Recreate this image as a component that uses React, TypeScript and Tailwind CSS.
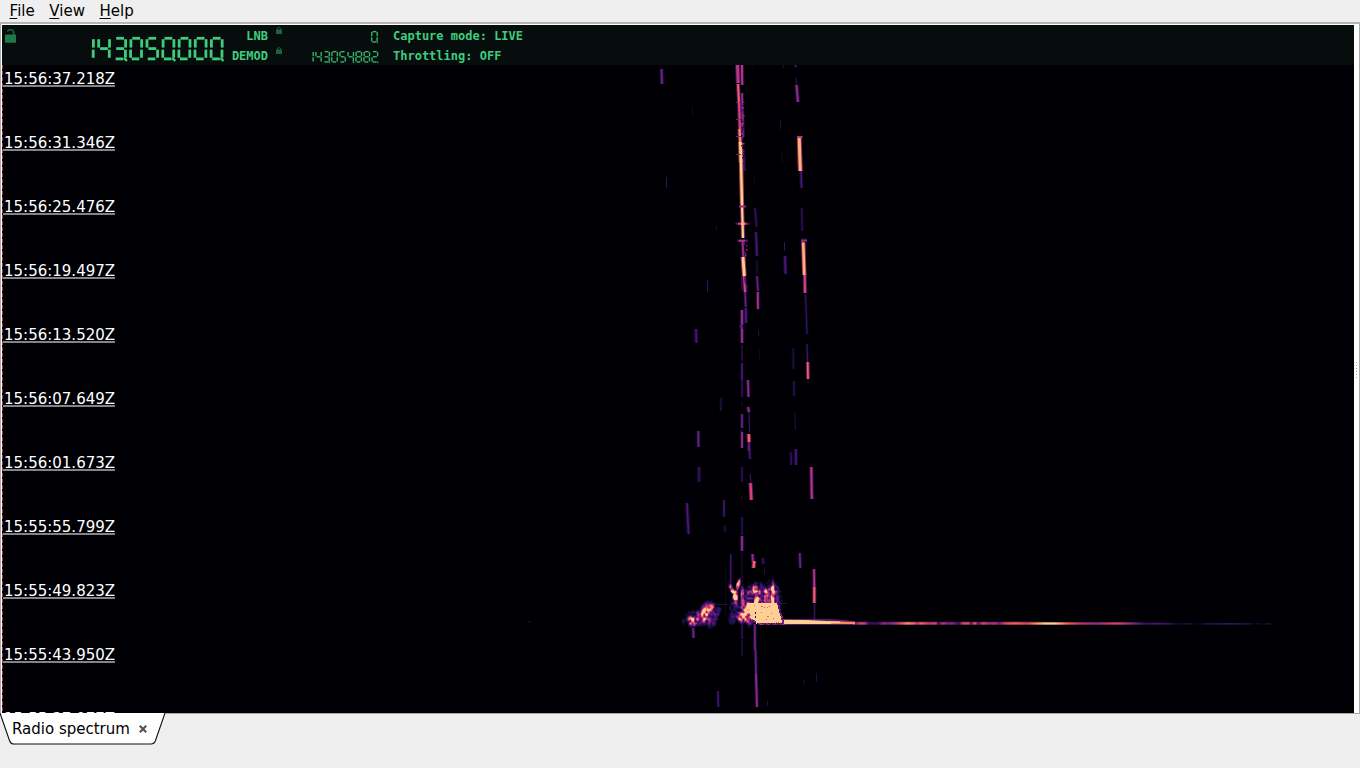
import type { ReactNode } from "react";

const SEGMENTS: Record<string, string> = {
  "0": "abcdef",
  "1": "bc",
  "2": "abged",
  "3": "abgcd",
  "4": "fgbc",
  "5": "afgcd",
  "8": "abcdefg",
};

const SEGMENT_PATHS: Record<string, string> = {
  a: "M3 1.3H10.8",
  b: "M12.4 2.2V10.6",
  c: "M12.2 12.6V20.8",
  d: "M2.4 21.9H10",
  e: "M1.3 12.6V20.8",
  f: "M1.6 2.2V10.6",
  g: "M3 11.6H10.8",
};

function Digits({ value, dots, small }: { value: string; dots: number[]; small?: boolean }) {
  const width = value.length * 16.1 - 1;
  const scale = small ? 0.5 : 1;
  return (
    <svg
      width={width * scale}
      height={24 * scale}
      viewBox={`0 0 ${width} 24`}
      stroke={small ? "#34b46d" : "#3dce7d"}
      strokeWidth={2.8}
      className="block overflow-visible"
    >
      {value.split("").map((digit, i) => (
        <g key={i} transform={`translate(${i * 16.1} 0)`}>
          {SEGMENTS[digit].split("").map((s) => (
            <path key={s} d={SEGMENT_PATHS[s]} />
          ))}
          {dots.includes(i) && <path d="M10.8 21.2l3 2.6" strokeWidth={2.4} />}
        </g>
      ))}
    </svg>
  );
}

function Lock({ open }: { open?: boolean }) {
  return open ? (
    <svg width="11" height="14" viewBox="0 0 11 14" className="block">
      <path d="M2.6 2.7Q3 .8 5.5.8Q8.7.8 8.7 4V6" fill="none" stroke="#19663e" strokeWidth="1.5" />
      <rect x="0" y="5.5" width="11" height="8.2" rx=".6" fill="#20784a" />
    </svg>
  ) : (
    <svg width="6" height="7" viewBox="0 0 6 7" className="block">
      <path d="M1.3 3V2Q1.3.6 3 .6T4.7 2V3" fill="none" stroke="#17583a" strokeWidth="1" />
      <rect x="0" y="2.5" width="6" height="4.5" fill="#1b643e" />
    </svg>
  );
}

const PALETTE = [
  "#000004", "#0b0822", "#1d1147", "#35115f", "#51127c", "#721f81",
  "#932b80", "#b73779", "#d8456c", "#f1605d", "#fc8961", "#feb078", "#fecf92",
];

// x1, y1, x2, y2, width, level, halo level
type Streak = [number, number, number, number, number, number, number];

const STREAKS: Streak[] = [
  [661.5, 69, 662, 84, 2, 5, 2],
  [692.5, 106, 692.5, 117, 1, 1, 0],
  [666.5, 177, 666.5, 188, 1, 3, 0],
  [752.5, 65, 752.5, 67, 1, 1, 0],
  [783, 65, 783.5, 68, 1, 2, 0],
  [795, 65, 796, 67, 2, 4, 0],
  [796, 78, 796.5, 86, 1, 3, 0],
  [796.5, 85, 798, 102, 2, 6, 3],
  [780.5, 121, 780.8, 129, 1, 2, 0],
  [782, 150, 782.5, 163, 1, 1, 0],
  [754.5, 174, 754.5, 186, 1, 1, 0],
  [737.5, 65, 738.2, 83, 3, 7, 4],
  [742, 65, 742.2, 85, 2, 7, 3],
  [738, 84, 739, 103, 2, 9, 5],
  [742, 93, 743, 137, 1.7, 6, 3],
  [739, 103, 740, 129, 2, 8, 5],
  [739.5, 129, 740.4, 144, 2.3, 10, 6],
  [744, 154, 744.5, 171, 1.5, 3, 2],
  [740.4, 142, 741, 162, 2.7, 12, 9],
  [741, 161, 742, 205, 2.3, 12, 9],
  [742, 204, 743, 238, 2.1, 12, 7],
  [742.5, 240, 743.5, 258, 2, 6, 3],
  [743, 257, 744.3, 276, 2.8, 12, 8],
  [744, 276, 745, 292, 2, 8, 4],
  [741.5, 276, 742, 291, 1, 3, 0],
  [745, 292, 745.8, 307, 1.5, 5, 2],
  [745.8, 308, 746, 323, 2, 4, 2],
  [742, 310, 742, 325, 2, 6, 3],
  [741, 325, 742, 329, 2, 5, 3],
  [742, 329, 742, 343, 2, 6, 3],
  [742, 345, 742, 361, 1.3, 3, 0],
  [742, 363, 742, 380, 1.7, 4, 1],
  [742, 380, 742, 397, 1.4, 3, 1],
  [748, 380, 748.5, 397, 1.7, 6, 3],
  [748, 407, 749, 412, 2, 6, 3],
  [749, 412, 749.5, 433, 1.3, 3, 0],
  [748.8, 434, 749, 442, 2.5, 9, 5],
  [749, 442, 749, 451, 1.6, 5, 3],
  [749.5, 451, 750, 459, 1.4, 4, 2],
  [750, 474, 751, 483, 1.3, 3, 0],
  [750.5, 483, 751.3, 500, 2.3, 8, 5],
  [742, 402, 742, 405, 1, 2, 0],
  [742, 414, 742, 428, 1.6, 5, 2],
  [741, 430, 742, 434, 2, 2, 0],
  [742, 432, 742, 448, 1.8, 6, 2],
  [742, 467, 742, 482, 1.4, 3, 1],
  [742, 496, 742, 499, 1, 2, 0],
  [742, 517, 742, 535, 1.2, 3, 1],
  [742, 536, 742, 551, 1.8, 6, 3],
  [742, 552, 742, 590, 1, 2, 0],
  [755, 208, 756.5, 227, 1.5, 3, 1],
  [756, 232, 757, 256, 1.5, 4, 2],
  [757, 260, 757, 273, 1, 2, 1],
  [757, 276, 758, 291, 1.5, 5, 2],
  [757.8, 292, 758, 309, 1.7, 7, 3],
  [758.5, 329, 759, 336, 1, 2, 0],
  [759.5, 349, 759.5, 360, 1, 1, 0],
  [784.5, 242, 784.5, 251, 1, 3, 0],
  [785, 256, 785.5, 274, 1.7, 4, 2],
  [799.2, 137, 800.3, 171, 3, 11, 7],
  [797, 137, 802.5, 137, 2, 7, 0],
  [801, 171, 801.5, 188, 1.5, 4, 2],
  [801.7, 208, 802.2, 231, 1.3, 3, 1],
  [803.2, 241, 804.3, 275, 2.6, 11, 7],
  [801, 240.5, 807, 240.5, 2, 6, 2],
  [804.7, 275, 805, 293, 2, 8, 5],
  [805.5, 294, 807, 334, 1.3, 3, 1],
  [807, 344, 807.5, 362, 1, 4, 1],
  [807.7, 362, 808, 379, 1.8, 9, 5],
  [808, 380, 808, 384, 1, 2, 0],
  [716.5, 226, 716.5, 229, 1, 2, 0],
  [707.5, 280, 707.5, 292, 1, 3, 0],
  [696, 329, 696.3, 343, 1.7, 4, 2],
  [720.8, 398, 720.8, 411, 1.3, 2, 1],
  [698.3, 431, 698.5, 447, 1.8, 5, 2],
  [699, 467, 699, 482, 1.7, 3, 2],
  [687, 503, 688.5, 534, 1.7, 4, 2],
  [724, 500, 724, 517, 1.5, 4, 1],
  [725, 525, 725, 532, 1.3, 2, 1],
  [793, 348, 793.5, 369, 1.2, 2, 1],
  [794, 381, 794, 396, 1.3, 3, 1],
  [795, 413, 795.3, 430, 1, 2, 0],
  [790.8, 452, 791.3, 465, 1.5, 3, 1],
  [795.8, 449, 796, 465, 1.6, 4, 2],
  [811.3, 467, 811.8, 499, 2, 7, 4],
  [799.8, 553, 800.3, 568, 1.7, 5, 2],
  [814, 569, 814.3, 588, 1.7, 7, 4],
  [814.3, 587, 814.3, 603, 2.1, 9, 5],
  [814.5, 604, 814.5, 622, 1.2, 3, 1],
  [730.7, 554, 730.7, 587, 1.2, 4, 1],
  [752.5, 554, 753, 563, 2, 6, 3],
  [754.3, 561, 753.5, 568, 2.5, 9, 5],
  [762.5, 558, 763.5, 564, 2, 3, 1],
  [764.5, 567, 764.5, 574, 1, 2, 0],
  [725.5, 569, 725.5, 618, 1, 1, 0],
  [693.2, 627, 693.5, 638, 2, 5, 2],
  [742, 622, 742, 639, 1.4, 3, 1],
  [742, 640, 742, 656, 1, 3, 0],
  [754.8, 624, 755, 650, 1.8, 5, 2],
  [755.5, 650, 756, 674, 1.6, 5, 2],
  [756, 674, 757, 707, 1.7, 6, 3],
  [718, 691, 718.3, 707, 1.5, 4, 1],
  [767.5, 701, 767.5, 706, 1, 2, 0],
  [816.5, 673, 816.5, 682, 1, 2, 0],
  [804, 680, 804, 685, 1, 2, 0],
  [779.5, 657, 779.5, 661, 1, 1, 0],
  [528, 622, 531, 622, 1, 2, 0],
];

const noise = (x: number, y: number) => {
  const n = Math.sin(x * 127.1 + y * 311.7) * 43758.5453;
  return n - Math.floor(n);
};

const smooth = (x: number, y: number, s: number) => {
  const u = x / s, v = y / s;
  const i = Math.floor(u), j = Math.floor(v);
  const a = u - i, b = v - j;
  return (
    (noise(i, j) * (1 - a) + noise(i + 1, j) * a) * (1 - b) +
    (noise(i, j + 1) * (1 - a) + noise(i + 1, j + 1) * a) * b
  );
};

// centre x, centre y, radius x, radius y, tilt, strength
const BLOBS = [
  [691.3, 620.5, 4, 4.5, 0, 14],
  [698, 617.5, 2.5, 6, -0.4, 11],
  [704.5, 613, 4.2, 8, -0.2, 15],
  [709, 609, 4.5, 6, -0.3, 11],
  [711, 616, 5, 9, 0, 7],
  [700, 617, 14, 8, -0.5, 6],
  [717, 611, 5, 5, 0, 4],
  [731.8, 589.5, 2, 4.5, 0.4, 15],
  [735, 596, 2.2, 6, 0, 15],
  [737.5, 585, 1.8, 6, -0.3, 11],
  [734, 606, 6, 6, 0, 5],
  [732, 617, 5, 6, 0, 4.5],
  [745, 606, 5, 7, 0, 9],
  [742.5, 616, 5, 5, 0, 15],
  [748, 611, 5, 10, 0, 14],
  [754.8, 589, 2.6, 5, 0, 14],
  [756, 599, 2.5, 7, 0, 16],
  [765.5, 596, 2, 9, 0, 12],
  [760, 595, 3, 10, 0, 8],
  [772.3, 595, 1.9, 12, 0, 15],
  [770, 597, 9, 13, 0, 7],
  [750, 597, 6, 10, 0, 6],
  [742, 596, 2, 9, 0, 8],
];

function Burst() {
  const cells: ReactNode[] = [];
  for (let y = 576; y < 630; y++) {
    for (let x = 682; x < 786; x++) {
      let strength = 0;
      for (const [cx, cy, rx, ry, tilt, s] of BLOBS) {
        const dx = (x - cx - tilt * (y - cy)) / rx;
        const dy = (y - cy) / ry;
        strength = Math.max(strength, s * Math.min(1, 1.5 * Math.exp(-(dx * dx + dy * dy) * 0.9)));
      }
      if (x > 747 && x < 778 && y > 585 && y < 603) strength = Math.max(strength, 5);
      let level = strength * (0.3 + 1.15 * smooth(x, y, 2.3)) - 1.3;
      const left = 749 + 3 * (smooth(x, y, 2) - 0.5) + Math.max(0, y - 617) * 1.6;
      const right = 776.5 + (y - 603) * 0.27;
      if (y >= 603 && y <= 622 && x > left && x < right) {
        level = noise(x, y) > 0.985 ? 9 : 12;
      } else if (y >= 602 && y <= 624 && x > left - 2 && x < right + 2) {
        level = Math.max(level, 5 * noise(x, y) + 2);
      }
      const index = Math.max(0, Math.min(12, Math.round(level)));
      if (index > 0) {
        cells.push(<rect key={`${x}-${y}`} x={x} y={y} width="1" height="1" fill={PALETTE[index]} />);
      }
    }
  }
  return <g shapeRendering="crispEdges">{cells}</g>;
}

const TAIL: [number, number][] = [
  [781, 12], [835, 11], [842, 10], [853, 9], [855, 5], [861, 8], [866, 7], [868, 3], [878, 3], [884, 6],
  [888, 5], [897, 7], [908, 10], [914, 9], [917, 7], [921, 9], [929, 7], [936, 8], [938, 3], [943, 7],
  [949, 5], [951, 6], [959, 3], [963, 8], [969, 8], [971, 4], [975, 9], [978, 4], [983, 8], [990, 6],
  [995, 7], [999, 5], [1005, 8], [1015, 9], [1027, 8], [1036, 10], [1045, 12], [1055, 12], [1067, 9], [1080, 7],
  [1095, 6], [1118, 8], [1130, 6], [1145, 3], [1158, 4], [1170, 3], [1178, 1], [1188, 2], [1197, 0],
  [1206, 2], [1230, 3], [1248, 2], [1256, 0], [1258, 2], [1262, 0], [1268, 2], [1275, 0],
];

function Waterfall() {
  return (
    <svg width="1352" height="648" viewBox="2 65 1352 648" className="block">
      <defs>
        <linearGradient id="tail" gradientUnits="userSpaceOnUse" x1="781" y1="0" x2="1275" y2="0">
          {TAIL.map(([x, level]) => (
            <stop key={x} offset={(x - 781) / 494} stopColor={PALETTE[level]} />
          ))}
        </linearGradient>
      </defs>
      {STREAKS.map(([x1, y1, x2, y2, w, level, halo], i) => (
        <g key={i}>
          {halo > 0 && <path d={`M${x1} ${y1}L${x2} ${y2}`} stroke={PALETTE[halo]} strokeWidth={w + 2} opacity=".75" />}
          <path d={`M${x1} ${y1}L${x2} ${y2}`} stroke={PALETTE[level]} strokeWidth={w} />
        </g>
      ))}
      {Array.from({ length: 96 }, (_, i) => {
        const y = 101 + i * 2;
        if ((y > 160 && y < 238) || (y > 255 && y < 277)) return null;
        return (
          <rect
            key={y}
            x={741 + (y > 238 ? 3 : 0) + Math.floor(noise(y, 3) * 3)}
            y={y}
            width="1.5"
            height="1.5"
            fill={PALETTE[y > 270 ? 4 : Math.floor(noise(y, 8) * 8)]}
          />
        );
      })}
      {[102, 119, 136, 154].map((y) => (
        <path key={y} d={`M736 ${y + 0.5}h9`} stroke={PALETTE[5]} strokeWidth="1" strokeDasharray="2 1" />
      ))}
      <path d="M735.5 223.7h14" stroke={PALETTE[4]} strokeWidth="2" />
      <path d="M738 223.7h8.5" stroke={PALETTE[8]} strokeWidth="2" />
      <path d="M741 223.7h3.5" stroke={PALETTE[11]} strokeWidth="3" />
      <path d="M737 240.7h11" stroke={PALETTE[4]} strokeWidth="2" />
      <path d="M739 240.7h6" stroke={PALETTE[7]} strokeWidth="2" />
      <path d="M739 206.5h7" stroke={PALETTE[6]} strokeWidth="2" />
      <path d="M780 619h51l24 2v4H765z" fill={PALETTE[5]} opacity=".8" />
      <path d="M853 621.5H1030l20 .5H1145l30 1h100v2H853z" fill="url(#tail)" opacity=".35" />
      <path d="M853 622.3H990L1030 622.4H1135L1150 623.1H1275V624.5H853z" fill="url(#tail)" />
      <path d="M756 621.5h26v-1.8l25 .4 24 1.2 12 .7v1.9l-36 .2-51-.1z" fill={PALETTE[12]} />
      <path d="M831 621.3l24 .7v2h-24z" fill={PALETTE[10]} />
      <path d="M806 621.6h34v1.5h-34z" fill={PALETTE[12]} />
      <Burst />
      <path d="M755.5 612v2M755.5 616v2" stroke="#1d1147" strokeWidth="1" />
      <path d="M778 603.5h9M715 604.5h12" stroke={PALETTE[2]} strokeWidth="1" />
      <path d="M2.5 65V713" stroke="#a8343c" strokeWidth="1" strokeDasharray="4 2" />
    </svg>
  );
}

const TIMES = [
  "15:56:37.218Z", "15:56:31.346Z", "15:56:25.476Z", "15:56:19.497Z", "15:56:13.520Z", "15:56:07.649Z",
  "15:56:01.673Z", "15:55:55.799Z", "15:55:49.823Z", "15:55:43.950Z", "15:55:37.977Z",
];

function Menu({ label }: { label: string }) {
  return (
    <span>
      <span className="underline decoration-1 underline-offset-2">{label[0]}</span>
      {label.slice(1)}
    </span>
  );
}

function Channel({ name, value, dots }: { name: string; value: string; dots: number[] }) {
  return (
    <div className="flex h-5 items-start">
      <span className="flex w-[43px] justify-end pt-1 leading-[14px]">{name}</span>
      <span className="ml-2 pt-[2px]">
        <Lock />
      </span>
      <span className="ml-auto pt-[6px]">
        <Digits value={value} dots={dots} small />
      </span>
    </div>
  );
}

export default function App() {
  return (
    <div className="flex h-[768px] w-[1360px] flex-col overflow-hidden bg-[#efefef] font-['DejaVu_Sans',sans-serif] text-[15px] text-black">
      <nav className="flex h-[22px] shrink-0 gap-[14.6px] pt-px pl-[9.6px] leading-[21px]">
        <Menu label="File" />
        <Menu label="View" />
        <Menu label="Help" />
      </nav>
      <main className="flex h-[692px] shrink-0 border-x border-t-2 border-b border-[#ababab] border-t-[#b4b4b4] bg-white pt-px pl-px">
        <div className="w-[1352px] shrink-0 overflow-hidden bg-[#000004]">
          <header className="flex h-10 bg-[#070d0d] font-['DejaVu_Sans_Mono',monospace] text-[12px] font-bold text-[#3dce7d]">
            <div className="w-[79px] pt-1 pl-[2.5px]">
              <Lock open />
            </div>
            <div className="w-[144px] pt-[12px]">
              <Digits value="143050000" dots={[2, 5, 8]} />
            </div>
            <div className="w-[154px]">
              <Channel name="LNB" value="0" dots={[0]} />
              <Channel name="DEMOD" value="143054882" dots={[2, 5, 8]} />
            </div>
            <div className="ml-[14px] pt-px leading-5">
              <div>Capture mode: LIVE</div>
              <div>Throttling: OFF</div>
            </div>
          </header>
          <div className="relative h-[648px] overflow-hidden">
            <Waterfall />
            <div className="absolute top-0 left-px text-white">
              {TIMES.map((time) => (
                <div key={time} className="h-16">
                  <div className="h-[22px] w-[112px] border-b-2 border-[#858389] pt-1 pl-px leading-[20px]">{time}</div>
                </div>
              ))}
            </div>
          </div>
        </div>
        <div className="flex grow flex-col items-center pt-[337px]">
          {[0, 1, 2, 3, 4, 5].map((dot) => (
            <span key={dot} className="mb-[2px] size-px bg-[#aaa]" />
          ))}
        </div>
      </main>
      <footer className="relative h-[54px]">
        <svg width="167" height="32" className="absolute top-[-1px] left-0">
          <path d="M0 0L1 3L9.5 27.5Q10.7 31 14 31H151Q154.2 31 155.5 27.5L165 0" fill="#fff" stroke="#111" strokeWidth="1.1" />
        </svg>
        <div className="relative flex h-[30px] items-center gap-[9px] pl-3">
          <span>Radio spectrum</span>
          <svg width="8" height="8" viewBox="0 0 8 8">
            <path d="M.8.8L7.2 7.2M7.2.8L.8 7.2" stroke="#555" strokeWidth="2.2" />
          </svg>
        </div>
      </footer>
    </div>
  );
}
